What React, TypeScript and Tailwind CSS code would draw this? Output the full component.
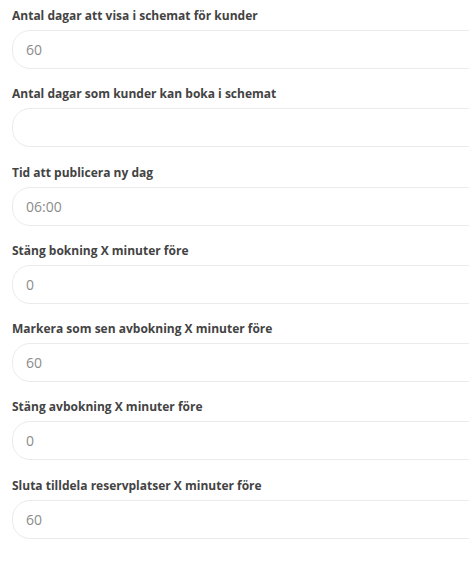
const fields = [
  { label: "Antal dagar att visa i schemat för kunder", value: "60" },
  { label: "Antal dagar som kunder kan boka i schemat", value: "" },
  { label: "Tid att publicera ny dag", value: "06:00" },
  { label: "Stäng bokning X minuter före", value: "0" },
  { label: "Markera som sen avbokning X minuter före", value: "60" },
  { label: "Stäng avbokning X minuter före", value: "0" },
  { label: "Sluta tilldela reservplatser X minuter före", value: "60" },
];

export default function App() {
  return (
    <div className="w-[469px] h-[561px] overflow-hidden bg-white pl-3 pt-[7px] font-['Open_Sans',sans-serif]">
      {fields.map((f) => (
        <div key={f.label} className="mb-[16.3px]">
          <label className="block h-[17px] text-[12px] leading-[17px] font-bold text-[#434343]">
            {f.label}
          </label>
          <input
            defaultValue={f.value}
            className="mt-[6px] block w-[480px] h-[39px] rounded-[18px] border border-[#ebebeb] bg-white pl-[13px] text-[14px] text-[#8c8c8c] outline-none"
          />
        </div>
      ))}
    </div>
  );
}
